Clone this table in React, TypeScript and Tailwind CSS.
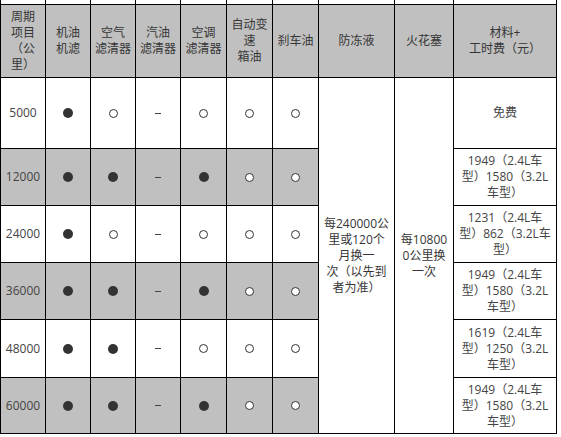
import React from "react";

type Mark = "f" | "o" | "d";

const rows: { km: string; marks: Mark[]; gray: boolean; cost: React.ReactNode }[] = [
  { km: "5000", marks: ["f", "o", "d", "o", "o", "o"], gray: false, cost: "免费" },
  {
    km: "12000",
    marks: ["f", "f", "d", "f", "o", "o"],
    gray: true,
    cost: (
      <>
        1949（2.4L车
        <br />
        型）1580（3.2L
        <br />
        车型）
      </>
    ),
  },
  {
    km: "24000",
    marks: ["f", "o", "d", "o", "o", "o"],
    gray: false,
    cost: (
      <>
        1231（2.4L车
        <br />
        型）862（3.2L车
        <br />
        型）
      </>
    ),
  },
  {
    km: "36000",
    marks: ["f", "f", "d", "f", "o", "o"],
    gray: true,
    cost: (
      <>
        1949（2.4L车
        <br />
        型）1580（3.2L
        <br />
        车型）
      </>
    ),
  },
  {
    km: "48000",
    marks: ["f", "f", "d", "o", "o", "o"],
    gray: false,
    cost: (
      <>
        1619（2.4L车
        <br />
        型）1250（3.2L
        <br />
        车型）
      </>
    ),
  },
  {
    km: "60000",
    marks: ["f", "f", "d", "f", "o", "o"],
    gray: true,
    cost: (
      <>
        1949（2.4L车
        <br />
        型）1580（3.2L
        <br />
        车型）
      </>
    ),
  },
];

function MarkIcon({ m }: { m: Mark }) {
  if (m === "f") return <span className="block w-[10px] h-[10px] rounded-full bg-[#333]" />;
  if (m === "o") return <span className="block w-[9px] h-[9px] rounded-full border border-[#333] bg-white" />;
  return <span className="block w-[6px] h-px bg-[#444]" />;
}

const cell = "border-r border-b border-black flex items-center justify-center text-center";

export default function App() {
  return (
    <div className="w-[561px] h-[437px] bg-white overflow-hidden font-['Open_Sans','Noto_Sans_CJK_SC',sans-serif] text-[12px] leading-[16px] text-[#363636]">
      <div className="grid grid-cols-[45px_45px_45px_45px_46px_46px_46px_76px_59px_103px] h-[4px] border-l border-black">
        {Array.from({ length: 10 }).map((_, i) => (
          <div key={i} className="border-r border-black" />
        ))}
      </div>
      <div className="grid grid-cols-[45px_45px_45px_45px_46px_46px_46px_76px_59px_103px] grid-rows-[73px_71px_57px_57px_57px_58px_56px] border-l border-t border-black w-max">
        {/* header */}
        <div className={`${cell} bg-[#c0c0c0]`}>
          周期
          <br />
          项目
          <br />
          （公
          <br />
          里）
        </div>
        <div className={`${cell} bg-[#c0c0c0]`}>
          机油
          <br />
          机滤
        </div>
        <div className={`${cell} bg-[#c0c0c0]`}>
          空气
          <br />
          滤清器
        </div>
        <div className={`${cell} bg-[#c0c0c0]`}>
          汽油
          <br />
          滤清器
        </div>
        <div className={`${cell} bg-[#c0c0c0]`}>
          空调
          <br />
          滤清器
        </div>
        <div className={`${cell} bg-[#c0c0c0]`}>
          自动变
          <br />
          速
          <br />
          箱油
        </div>
        <div className={`${cell} bg-[#c0c0c0]`}>刹车油</div>
        <div className={`${cell} bg-[#c0c0c0]`}>防冻液</div>
        <div className={`${cell} bg-[#c0c0c0]`}>火花塞</div>
        <div className={`${cell} bg-[#c0c0c0]`}>
          材料+
          <br />
          工时费（元）
        </div>

        {rows.map((r, ri) => (
          <React.Fragment key={r.km}>
            <div className={`${cell} ${r.gray ? "bg-[#c0c0c0]" : "bg-white"} text-[#444]`}>{r.km}</div>
            {r.marks.map((m, mi) => (
              <div key={mi} className={`${cell} ${r.gray ? "bg-[#c0c0c0]" : "bg-white"}`}>
                <MarkIcon m={m} />
              </div>
            ))}
            {ri === 0 && (
              <>
                <div className={`${cell} row-span-6 bg-white`}>
                  每240000公
                  <br />
                  里或120个
                  <br />
                  月换一
                  <br />
                  次（以先到
                  <br />
                  者为准）
                </div>
                <div className={`${cell} row-span-6 bg-white`}>
                  每10800
                  <br />
                  0公里换
                  <br />
                  一次
                </div>
              </>
            )}
            <div className={`${cell} bg-white text-[#444]`}>
              <div>{r.cost}</div>
            </div>
          </React.Fragment>
        ))}
      </div>
    </div>
  );
}
